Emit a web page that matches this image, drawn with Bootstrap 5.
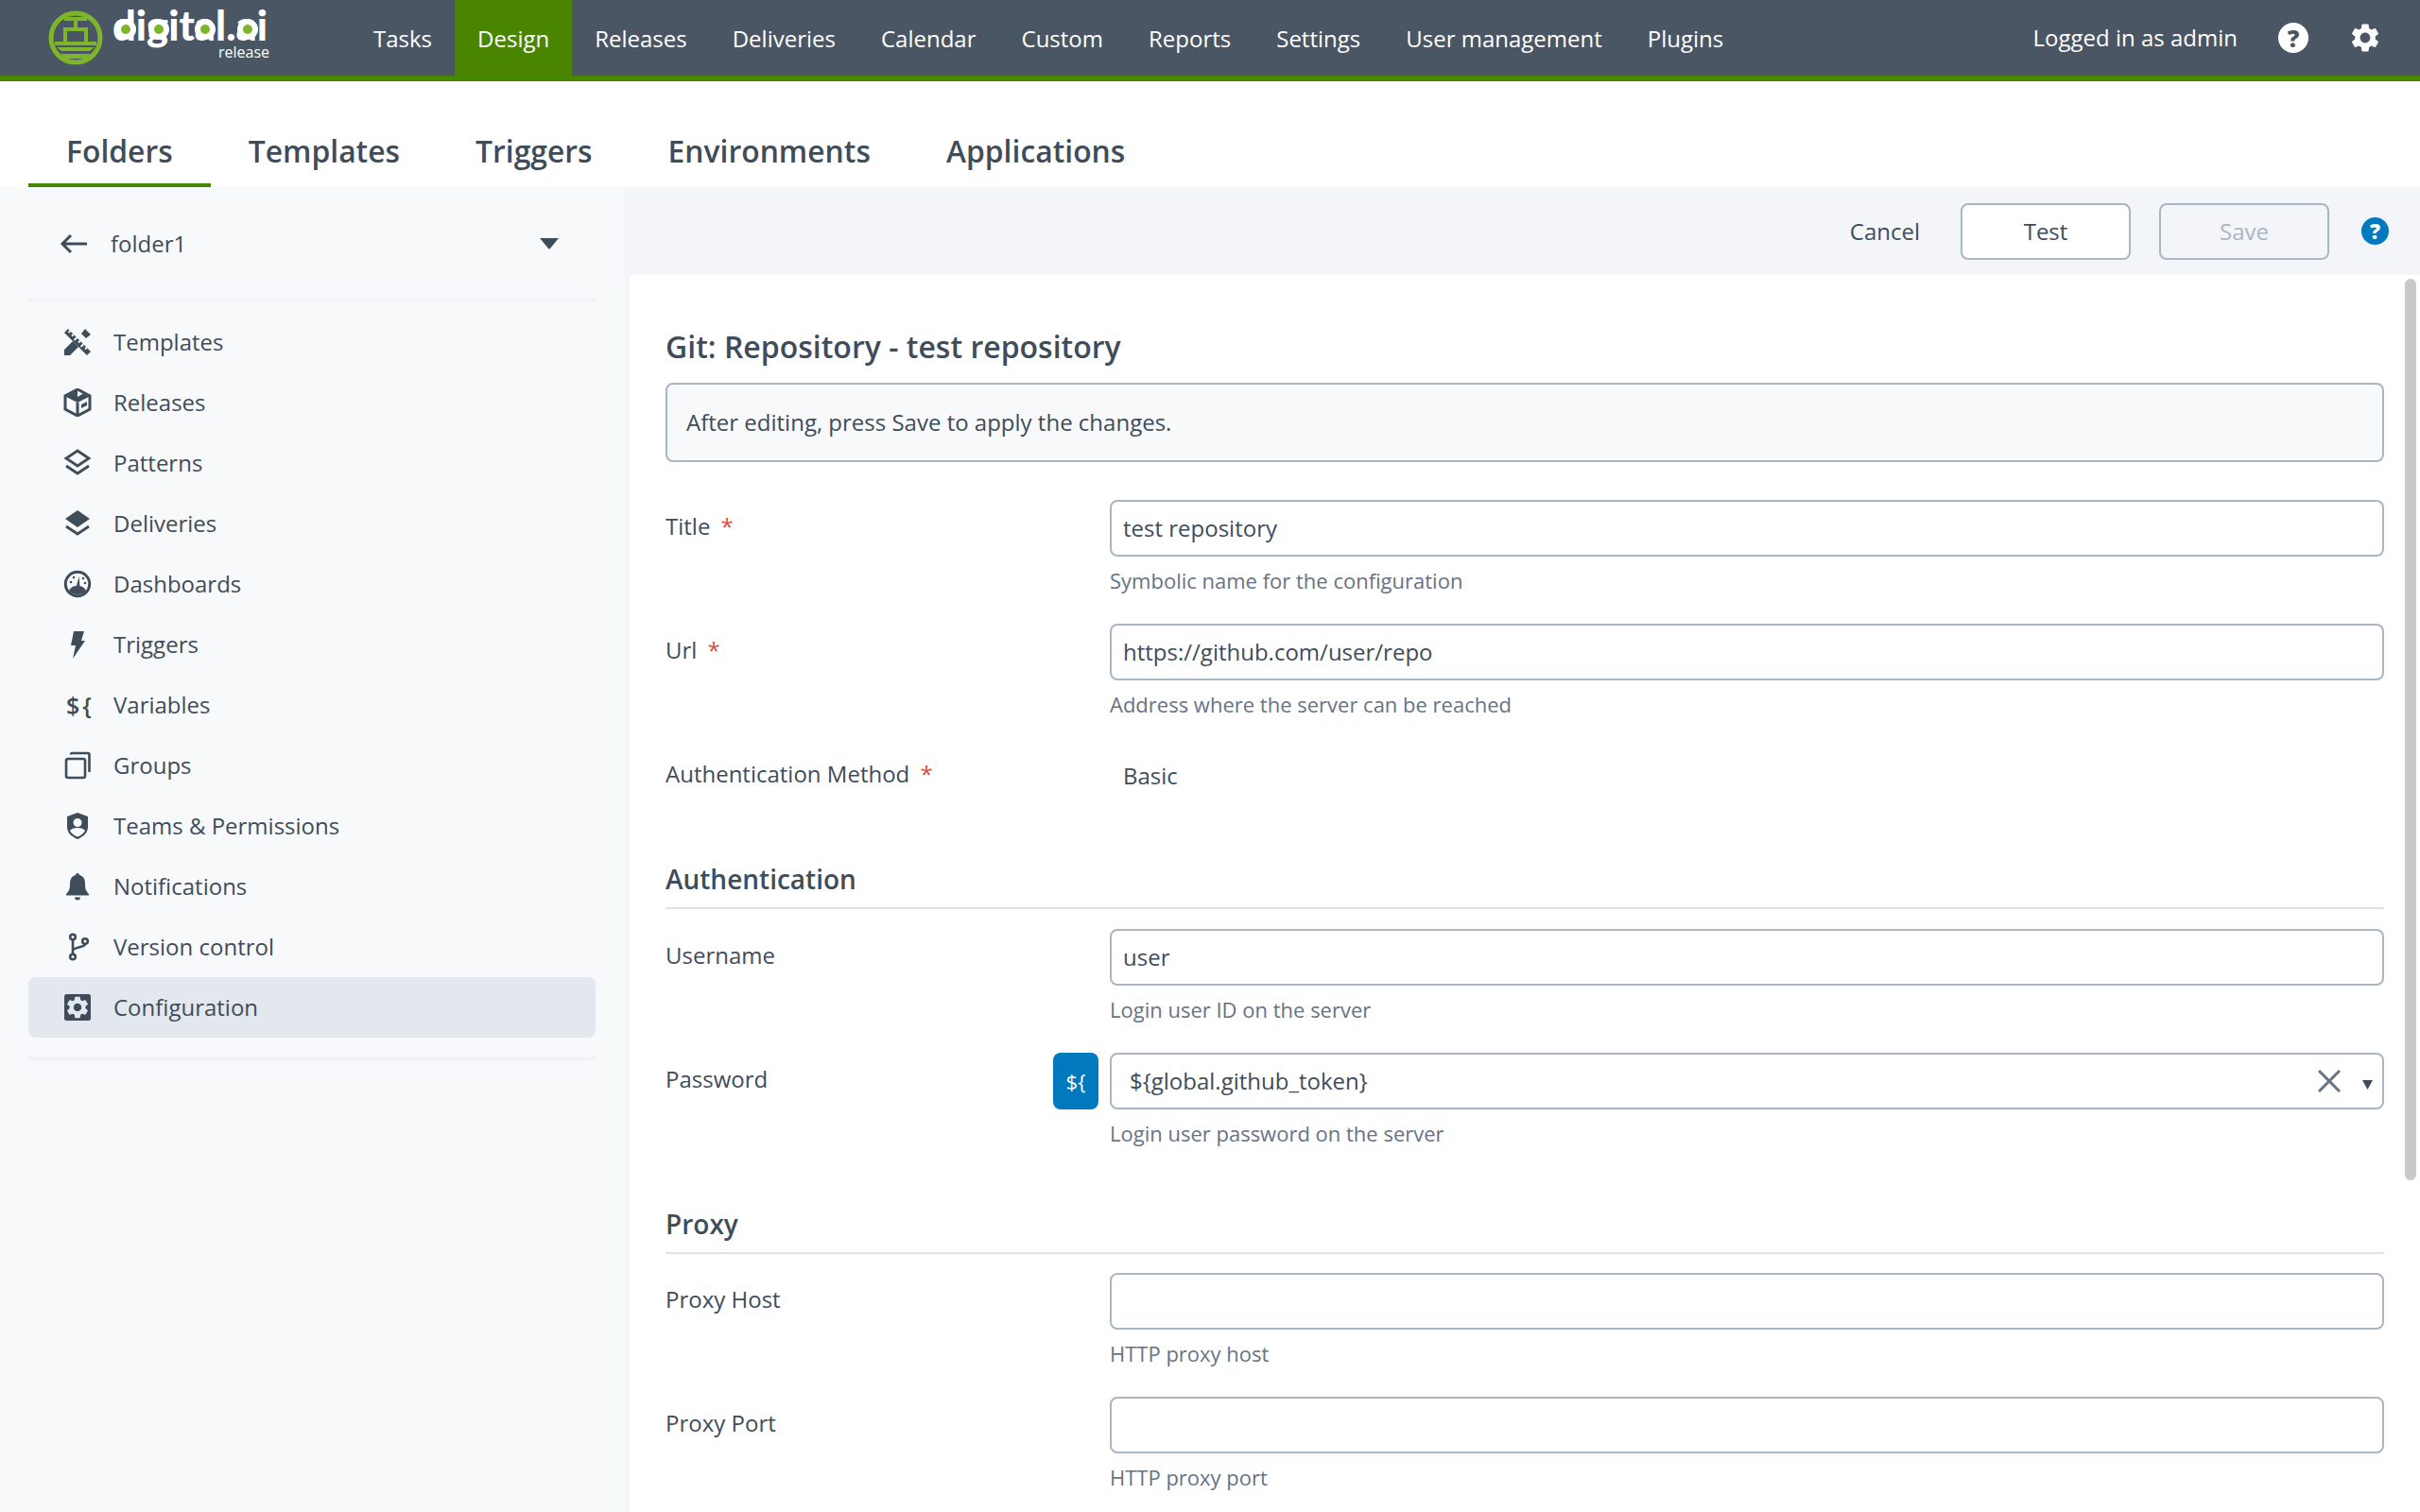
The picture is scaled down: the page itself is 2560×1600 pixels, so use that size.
<!DOCTYPE html>
<html lang="en">

<head>
  <meta charset="UTF-8" />
  <meta name="viewport" content="width=device-width, initial-scale=1" />
  <title>Git: Repository - test repository</title>
  <link href="https://cdn.jsdelivr.net/npm/bootstrap@5.3.3/dist/css/bootstrap.min.css" rel="stylesheet">
  <style>
    html, body { height: 100%; }
    body { font-family: "Open Sans", "Liberation Sans", sans-serif; font-size: 24px; color: #3f4c5a; overflow: hidden; background: #fff; }
    svg { display: block; flex: none; }

    .top-bar { height: 86px; background: #4a5663; border-bottom: 6px solid #4a8500; padding-right: 40px; }
    .logo-box { width: 371px; padding-left: 50px; }
    .top-link { display: block; height: 80px; line-height: 82px; padding: 0 24px; color: #fff; text-decoration: none; white-space: nowrap; }
    .top-link.on { background: #4a8500; }
    .top-right { height: 80px; }
    .top-user { color: #fff; margin-right: 43px; line-height: 82px; }
    .round-help { width: 32px; height: 32px; border-radius: 50%; background: #fff; color: #4a5663; font-weight: 800; font-size: 25px; line-height: 32px; margin-right: 42px; }
    .round-help-sm { width: 29px; height: 29px; border-radius: 50%; background: #0079bf; color: #fff; font-weight: 800; font-size: 22px; line-height: 29px; margin-left: 34px; }

    .tab-bar { height: 112px; padding-left: 30px; }
    .tab-link { display: block; height: 112px; padding: 54px 40px 0; line-height: 40px; font-size: 31.85px; font-weight: 600; color: #3f4c5a; text-decoration: none; border-bottom: 4px solid transparent; }
    .tab-link.on { border-bottom-color: #4a8500; }

    .work-area { height: calc(100vh - 198px); }
    .side-col { width: 660px; flex: none; background: #f8f9fb; padding: 0 30px; }
    .side-head { height: 122px; padding: 2px 39px 0 33px; border-bottom: 4px solid #f1f3f6; }
    .side-list { padding-top: 10px; padding-bottom: 20px; border-bottom: 4px solid #f1f3f6; }
    .side-item { height: 64px; padding-left: 37px; gap: 23px; color: #3f4c5a; text-decoration: none; border-radius: 8px; }
    .side-item.on { background: #e3e7ee; }
    .side-icon { width: 30px; height: 30px; fill: #3f4c5a; }
    .line-icon { width: 30px; height: 30px; fill: none; stroke: #3f4c5a; }
    .var-glyph { width: 30px; padding-left: 3px; font-weight: 600; font-size: 25px; line-height: 30px; letter-spacing: 3px; white-space: nowrap; }

    .main-col { background: #f3f5f9; min-width: 0; }
    .tool-bar { height: 93px; padding-right: 33px; }
    .tool-cancel { margin-right: 43px; }
    .tool-btn { width: 180px; height: 60px; border: 2px solid #a9b6c3; border-radius: 8px; background: #fff; color: #3f4c5a; font-size: 24px; }
    .tool-btn:disabled { background: #f3f5f9; color: #a9b6c3; border-color: #a9b6c3; opacity: 1; }
    .tool-gap { margin-right: 30px; }

    .form-panel { margin-left: 6px; height: calc(100vh - 291px); background: #fff; padding: 54px 38px 0 38px; overflow: hidden; }
    .form-title { font-size: 32px; font-weight: 600; line-height: 44px; margin: 0 0 16px; }
    .info-box { height: 84px; line-height: 80px; padding: 0 20px; margin-bottom: 40px; background: #f8f9fb; border: 2px solid #a9b6c3; border-radius: 8px; }
    .form-line { margin-bottom: 29px; }
    .label-col { width: 470px; flex: none; padding-right: 12px; }
    .label-text { padding-top: 12px; line-height: 32px; }
    .req-star { color: #d94c3d; margin-left: 5px; }
    .field-box { height: 60px; width: 100%; border: 2px solid #a9b6c3; border-radius: 8px; padding: 0 12px 2px; font-size: 24px; color: #3f4c5a; background: #fff; outline: none; }
    .field-var { padding-left: 19px; }
    .help-line { height: 42px; padding-top: 9px; line-height: 32px; font-size: 22px; color: #667385; }
    .plain-value { height: 60px; padding: 14px 0 0 14px; line-height: 32px; }
    .var-btn { width: 48px; height: 60px; background: #0079bf; color: #fff; border-radius: 8px; font-size: 22px; }
    .field-over { position: absolute; right: 0; top: 0; height: 60px; }
    .field-caret { margin: 8px 12px 0 23px; }
    .section-title { font-size: 28px; font-weight: 600; line-height: 40px; margin: 59px 0 21px; padding-bottom: 10px; border-bottom: 2px solid #dfe3e8; }
    .section-close { margin-bottom: 20px; }
    .scroll-thumb { position: absolute; top: 4px; right: 4px; width: 12px; height: 954px; background: #c9c9c9; border-radius: 6px; }
  </style>
</head>

<body>
  <nav class="top-bar d-flex align-items-start">
    <div class="logo-box">
      <svg width="240" height="80" viewBox="50 0 240 80">
        <circle cx="80" cy="40" r="26" fill="none" stroke="#7fb52b" stroke-width="5" />
        <path d="M68 20h24M80 20v11M69 31h22v15H69zM58 46h44" fill="none" stroke="#7fb52b" stroke-width="4" />
        <path d="M60 50h40l-5 4H65zM64 57h32l-6 5H70z" fill="#7fb52b" />
        <text x="119" y="43" font-family="Lato, sans-serif" font-weight="900" font-size="44" fill="#fff" textLength="164" lengthAdjust="spacingAndGlyphs">digital.ai</text>
        <g fill="#fff">
          <circle cx="133" cy="31" r="11" />
          <circle cx="168" cy="31" r="11" />
          <circle cx="217" cy="31" r="11" />
          <circle cx="262" cy="31" r="11" />
        </g>
        <g fill="#7fb52b">
          <circle cx="133" cy="31" r="5" />
          <circle cx="168" cy="31" r="5" />
          <circle cx="217" cy="31" r="5" />
          <circle cx="262" cy="31" r="5" />
        </g>
        <text x="231" y="61" font-family="'Open Sans', sans-serif" font-size="16" fill="#fff">release</text>
      </svg>
    </div>
    <a class="top-link" href="#">Tasks</a>
    <a class="top-link on" href="#">Design</a>
    <a class="top-link" href="#">Releases</a>
    <a class="top-link" href="#">Deliveries</a>
    <a class="top-link" href="#">Calendar</a>
    <a class="top-link" href="#">Custom</a>
    <a class="top-link" href="#">Reports</a>
    <a class="top-link" href="#">Settings</a>
    <a class="top-link" href="#">User management</a>
    <a class="top-link" href="#">Plugins</a>
    <div class="top-right ms-auto d-flex align-items-center">
      <span class="top-user">Logged in as admin</span>
      <span class="round-help text-center">?</span>
      <svg width="36" height="36" viewBox="0 0 24 24" fill="#fff" fill-rule="evenodd">
        <path d="M19.14 12.94c.04-.3.06-.61.06-.94 0-.32-.02-.64-.07-.94l2.03-1.58c.18-.14.23-.41.12-.61l-1.92-3.32c-.12-.22-.37-.29-.59-.22l-2.39.96c-.5-.38-1.03-.7-1.62-.94l-.36-2.54c-.04-.24-.24-.41-.48-.41h-3.84c-.24 0-.43.17-.47.41l-.36 2.54c-.59.24-1.13.57-1.62.94l-2.39-.96c-.22-.08-.47 0-.59.22L2.74 8.87c-.12.21-.08.47.12.61l2.03 1.58c-.05.3-.09.63-.09.94s.02.64.07.94l-2.03 1.58c-.18.14-.23.41-.12.61l1.92 3.32c.12.22.37.29.59.22l2.39-.96c.5.38 1.03.7 1.62.94l.36 2.54c.05.24.24.41.48.41h3.84c.24 0 .44-.17.47-.41l.36-2.54c.59-.24 1.13-.56 1.62-.94l2.39.96c.22.08.47 0 .59-.22l1.92-3.32c.12-.22.07-.47-.12-.61l-2.01-1.58zM12 15.6c-1.98 0-3.6-1.62-3.6-3.6s1.62-3.6 3.6-3.6 3.6 1.62 3.6 3.6-1.62 3.6-3.6 3.6z" />
      </svg>
    </div>
  </nav>

  <div class="tab-bar d-flex">
    <a class="tab-link on" href="#">Folders</a>
    <a class="tab-link" href="#">Templates</a>
    <a class="tab-link" href="#">Triggers</a>
    <a class="tab-link" href="#">Environments</a>
    <a class="tab-link" href="#">Applications</a>
  </div>

  <div class="work-area d-flex">
    <aside class="side-col">
      <div class="side-head d-flex align-items-center">
        <svg width="30" height="24" viewBox="0 0 30 24" fill="none" stroke="#3f4c5a" stroke-width="3">
          <path d="M29 12H3M12 3l-9 9 9 9" />
        </svg>
        <span class="ms-4">folder1</span>
        <svg class="ms-auto" width="20" height="12" viewBox="0 0 20 12"><path d="M0 0h20L10 12z" fill="#3f4c5a" /></svg>
      </div>
      <div class="side-list">
        <a class="side-item d-flex align-items-center" href="#">
          <svg class="side-icon" viewBox="0 0 30 30">
            <path d="M1 29v-6l9-9 6 6-9 9zM19 6l4-5 6 6-5 4z" />
            <path d="M5 1L1 5l24 24 4-4z" />
            <path d="M7.500 3l-2 2M11 6.500l-2 2M14.500 10l-3 3M18 13.500l-2 2M21.500 17l-3 3M25 20.500l-2 2" stroke="#f8f9fb" stroke-width="1.800" />
          </svg>
          <span>Templates</span>
        </a>
        <a class="side-item d-flex align-items-center" href="#">
          <svg class="side-icon" viewBox="0 0 30 30">
            <path d="M15 1l13 7v14l-13 7-13-7V8z" fill="none" stroke="#3f4c5a" stroke-width="3" />
            <path d="M15 2L3 9l12 6 12-6-6-3.500-6 3.500z" />
            <path d="M15 15v13" stroke="#3f4c5a" stroke-width="3" />
            <path d="M19 17l6-3v4l-6 3z" />
          </svg>
          <span>Releases</span>
        </a>
        <a class="side-item d-flex align-items-center" href="#">
          <svg class="line-icon" viewBox="0 0 30 30" stroke-width="2.800">
            <path d="M15 2l12 8-12 8-12-8z" />
            <path d="M3 18l12 8 12-8" />
          </svg>
          <span>Patterns</span>
        </a>
        <a class="side-item d-flex align-items-center" href="#">
          <svg class="side-icon" viewBox="0 0 30 30">
            <path d="M15 1l13 9-13 9-13-9z" />
            <path d="M3 18l12 8 12-8" fill="none" stroke="#3f4c5a" stroke-width="2.800" />
          </svg>
          <span>Deliveries</span>
        </a>
        <a class="side-item d-flex align-items-center" href="#">
          <svg class="side-icon" viewBox="0 0 30 30">
            <circle cx="15" cy="15" r="12.700" fill="none" stroke="#3f4c5a" stroke-width="3" />
            <path d="M6 22c2-4 5-5 9-5s7 1 9 5c-2 3-5 4-9 4s-7-1-9-4z" />
            <path d="M14 17l2.500-10 1 10z" />
            <circle cx="8" cy="13" r="1.300" />
            <circle cx="11" cy="8" r="1.300" />
            <circle cx="21" cy="9" r="1.300" />
            <circle cx="23" cy="14" r="1.300" />
          </svg>
          <span>Dashboards</span>
        </a>
        <a class="side-item d-flex align-items-center" href="#">
          <svg class="side-icon" viewBox="0 0 30 30"><path d="M11 1h11l-3 10h4L10 30l3-14H8z" /></svg>
          <span>Triggers</span>
        </a>
        <a class="side-item d-flex align-items-center" href="#">
          <span class="var-glyph">${</span>
          <span>Variables</span>
        </a>
        <a class="side-item d-flex align-items-center" href="#">
          <svg class="line-icon" viewBox="0 0 30 30" stroke-width="2.600">
            <rect x="3" y="8" width="20" height="20" rx="2" />
            <path d="M8 3.500c0-1 .8-1.500 1.500-1.500H26c1 0 1.500.8 1.500 1.500V22" />
          </svg>
          <span>Groups</span>
        </a>
        <a class="side-item d-flex align-items-center" href="#">
          <svg class="side-icon" viewBox="0 0 30 30" fill-rule="evenodd">
            <path d="M15 1l11 4v11c0 7-6 11-11 13C10 27 4 23 4 16V5zM15 7a4.500 4.500 0 1 0 0 9 4.500 4.500 0 0 0 0-9zM7 20c1.500 3 5 5.500 8 6.500 3-1 6.500-3.500 8-6.500-1.500-2-4-3-8-3s-6.500 1-8 3z" />
          </svg>
          <span>Teams &amp; Permissions</span>
        </a>
        <a class="side-item d-flex align-items-center" href="#">
          <svg class="side-icon" viewBox="0 0 30 30">
            <path d="M15 1c1.200 0 2 .8 2 2 4 1 6 4 6 9 0 6 1 8 4 11v1.500H3V23c3-3 4-5 4-11 0-5 2-8 6-9 0-1.200.8-2 2-2z" />
            <path d="M12 26.500h6c0 1.700-1.300 3-3 3s-3-1.300-3-3z" />
          </svg>
          <span>Notifications</span>
        </a>
        <a class="side-item d-flex align-items-center" href="#">
          <svg class="line-icon" viewBox="0 0 30 30" stroke-width="2.600">
            <circle cx="10" cy="4.500" r="2.800" />
            <circle cx="10" cy="25.500" r="2.800" />
            <circle cx="23" cy="9" r="2.800" />
            <path d="M10 7.500v15M10 19c0-4 13-3 13-7" />
          </svg>
          <span>Version control</span>
        </a>
        <a class="side-item on d-flex align-items-center" href="#">
          <svg class="side-icon" viewBox="0 0 30 30">
            <rect x="1" y="1" width="28" height="28" rx="2.500" />
            <path fill="#e3e7ee" fill-rule="evenodd" transform="translate(1 1) scale(1.167)" d="M19.14 12.94c.04-.3.06-.61.06-.94 0-.32-.02-.64-.07-.94l2.03-1.58c.18-.14.23-.41.12-.61l-1.92-3.32c-.12-.22-.37-.29-.59-.22l-2.39.96c-.5-.38-1.03-.7-1.62-.94l-.36-2.54c-.04-.24-.24-.41-.48-.41h-3.84c-.24 0-.43.17-.47.41l-.36 2.54c-.59.24-1.13.57-1.62.94l-2.39-.96c-.22-.08-.47 0-.59.22L2.74 8.87c-.12.21-.08.47.12.61l2.03 1.58c-.05.3-.09.63-.09.94s.02.64.07.94l-2.03 1.58c-.18.14-.23.41-.12.61l1.92 3.32c.12.22.37.29.59.22l2.39-.96c.5.38 1.03.7 1.62.94l.36 2.54c.05.24.24.41.48.41h3.84c.24 0 .44-.17.47-.41l.36-2.54c.59-.24 1.13-.56 1.62-.94l2.39.96c.22.08.47 0 .59-.22l1.92-3.32c.12-.22.07-.47-.12-.61l-2.01-1.58zM12 15.6c-1.98 0-3.6-1.62-3.6-3.6s1.62-3.6 3.6-3.6 3.6 1.62 3.6 3.6-1.62 3.6-3.6 3.6z" />
          </svg>
          <span>Configuration</span>
        </a>
      </div>
    </aside>

    <main class="main-col flex-grow-1">
      <div class="tool-bar d-flex align-items-center justify-content-end">
        <span class="tool-cancel">Cancel</span>
        <button class="btn tool-btn tool-gap p-0" type="button">Test</button>
        <button class="btn tool-btn p-0" type="button" disabled>Save</button>
        <span class="round-help-sm text-center">?</span>
      </div>

      <div class="form-panel position-relative">
        <div class="scroll-thumb"></div>
        <h1 class="form-title">Git: Repository - test repository</h1>
        <div class="info-box">After editing, press Save to apply the changes.</div>

        <div class="d-flex form-line">
          <div class="label-col label-text">Title <span class="req-star">*</span></div>
          <div class="flex-grow-1">
            <input class="field-box" type="text" value="test repository">
            <div class="help-line">Symbolic name for the configuration</div>
          </div>
        </div>
        <div class="d-flex form-line">
          <div class="label-col label-text">Url <span class="req-star">*</span></div>
          <div class="flex-grow-1">
            <input class="field-box" type="text" value="https://github.com/user/repo">
            <div class="help-line">Address where the server can be reached</div>
          </div>
        </div>
        <div class="d-flex form-line">
          <div class="label-col label-text">Authentication Method <span class="req-star">*</span></div>
          <div class="flex-grow-1 plain-value">Basic</div>
        </div>

        <h2 class="section-title">Authentication</h2>
        <div class="d-flex form-line">
          <div class="label-col label-text">Username</div>
          <div class="flex-grow-1">
            <input class="field-box" type="text" value="user">
            <div class="help-line">Login user ID on the server</div>
          </div>
        </div>
        <div class="d-flex form-line">
          <div class="label-col d-flex align-items-start justify-content-between">
            <span class="label-text">Password</span>
            <span class="var-btn d-flex align-items-center justify-content-center">${</span>
          </div>
          <div class="flex-grow-1">
            <div class="position-relative">
              <input class="field-box field-var" type="text" value="${global.github_token}">
              <div class="field-over d-flex align-items-center">
                <svg width="24" height="24" viewBox="0 0 24 24" fill="none" stroke="#667385" stroke-width="3"><path d="M1 1l22 22M23 1L1 23" /></svg>
                <svg class="field-caret" width="11" height="10" viewBox="0 0 11 10"><path d="M0 0h11L5.500 10z" fill="#3f4c5a" /></svg>
              </div>
            </div>
            <div class="help-line">Login user password on the server</div>
          </div>
        </div>

        <h2 class="section-title section-close">Proxy</h2>
        <div class="d-flex form-line">
          <div class="label-col label-text">Proxy Host</div>
          <div class="flex-grow-1">
            <input class="field-box" type="text">
            <div class="help-line">HTTP proxy host</div>
          </div>
        </div>
        <div class="d-flex form-line">
          <div class="label-col label-text">Proxy Port</div>
          <div class="flex-grow-1">
            <input class="field-box" type="text">
            <div class="help-line">HTTP proxy port</div>
          </div>
        </div>
      </div>
    </main>
  </div>

  <script src="https://cdn.jsdelivr.net/npm/bootstrap@5.3.3/dist/js/bootstrap.bundle.min.js"></script>
</body>

</html>
